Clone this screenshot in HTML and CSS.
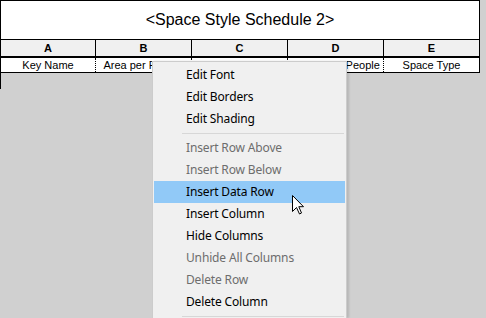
FILE: index.html
```html
<!DOCTYPE html>
<html lang="en">
<head>
  <meta charset="UTF-8" />
  <title>Space Style Schedule 2</title>
  <link rel="stylesheet" href="styles.css">
</head>
<body>

  <div class="sheet">
    <div class="title">&lt;Space Style Schedule 2&gt;</div>
    <div class="head-row">
      <div class="cell">A</div>
      <div class="cell">B</div>
      <div class="cell">C</div>
      <div class="cell">D</div>
      <div class="cell">E</div>
    </div>
    <div class="data-row">
      <div class="cell">Key Name</div>
      <div class="cell">Area per Person</div>
      <div class="cell"></div>
      <div class="cell">Number of People</div>
      <div class="cell">Space Type</div>
    </div>
    <div class="stub"></div>
  </div>

  <ul class="menu">
    <li class="item">Edit Font</li>
    <li class="item">Edit Borders</li>
    <li class="item">Edit Shading</li>
    <li class="sep"></li>
    <li class="item disabled">Insert Row Above</li>
    <li class="item disabled">Insert Row Below</li>
    <li class="item hover">Insert Data Row</li>
    <li class="item">Insert Column</li>
    <li class="item">Hide Columns</li>
    <li class="item disabled">Unhide All Columns</li>
    <li class="item disabled">Delete Row</li>
    <li class="item">Delete Column</li>
    <li class="sep"></li>
  </ul>

  <svg class="cursor" width="13" height="20" viewBox="0 0 13 20">
    <path d="M0.5 0.5 L0.5 16.5 L4.5 12.5 L7.5 19 L9.5 18 L6.8 11.7 L11.5 11.7 Z"
          fill="#fff" stroke="#000" stroke-width="1" stroke-linejoin="miter" />
  </svg>

</body>
</html>
```

FILE: styles.css
```css
body {
  margin: 0;
  background: #d0d0d0;
  font-family: "Liberation Sans", Arial, sans-serif;
  color: #000;
  overflow: hidden;
  height: 318px;
}
.sheet {
  width: 480px;
}
.title {
  height: 40px;
  box-sizing: border-box;
  border: 1px solid #000;
  background: #fff;
  display: flex;
  align-items: center;
  justify-content: center;
  font-size: 16px;
}
.head-row,
.data-row {
  display: grid;
  grid-template-columns: repeat(5, 96px);
}
.head-row {
  background: #f0f0f0;
  border-bottom: 2px solid #000;
}
.head-row .cell {
  height: 16px;
  line-height: 16px;
  text-align: center;
  font-size: 11px;
  font-weight: bold;
  border-right: 1px solid #000;
}
.data-row {
  background: #fff;
  border-bottom: 1px solid #000;
}
.data-row .cell {
  height: 14px;
  line-height: 14px;
  text-align: center;
  font-size: 11px;
  white-space: nowrap;
  overflow: hidden;
  border-right: 1px dotted #000;
}
.data-row .cell:last-child {
  border-right: 1px solid #000;
}
.head-row .cell:first-child,
.data-row .cell:first-child {
  border-left: 1px solid #000;
}
.stub {
  height: 16px;
  border-left: 1px solid #000;
}
.menu {
  position: absolute;
  left: 152px;
  top: 61px;
  width: 195px;
  height: 257px;
  box-sizing: border-box;
  margin: 0;
  padding: 2px 1px 0;
  list-style: none;
  background: #f0f0f0;
  border: 1px solid #cccccc;
  border-bottom: none;
  box-shadow: 2px 0 2px rgba(0,0,0,0.12);
  font-family: "Noto Sans", "Open Sans", sans-serif;
  font-size: 12px;
  letter-spacing: -0.15px;
}
.item {
  height: 22px;
  line-height: 22px;
  padding-left: 32px;
  white-space: nowrap;
}
.item.disabled {
  color: #6d6d6d;
}
.item.hover {
  background: #91c9f7;
}
.sep {
  height: 1px;
  margin: 3px 1px 3px 28px;
  background: #d7d7d7;
}
.cursor {
  position: absolute;
  left: 292px;
  top: 195px;
}
```
